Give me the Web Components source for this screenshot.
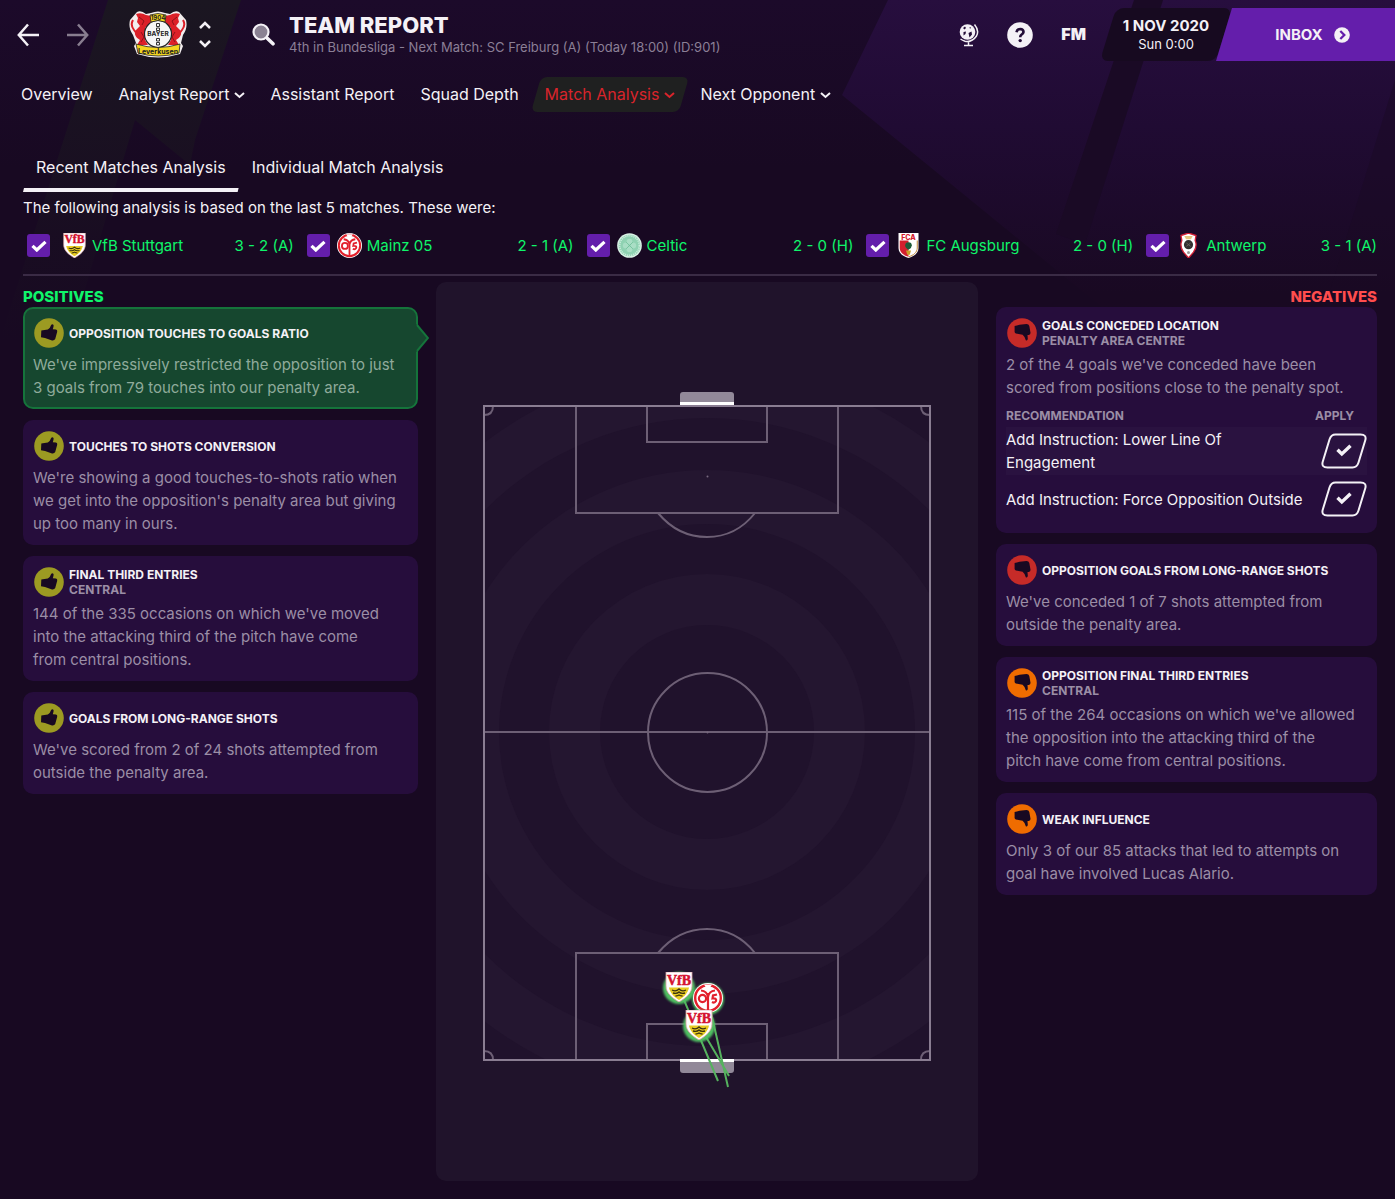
<!DOCTYPE html>
<html lang="en">
<head>
<meta charset="utf-8">
<meta name="viewport" content="width=device-width, initial-scale=1">
<title>Team Report</title>
<style>
    :root {
        --text: #f4f1f6;
        --muted: #9b8ea6;
        --card: #260d3c;
        --ink: #180922;
        --accent: #641eab;
        --good: #0ff56a;
        --bad: #ff4d4d;
    }
    body {
        margin: 0;
        position: relative;
        min-height: 100vh;
        background: var(--ink);
        color: var(--text);
        font: 15px/23px Inter, "Liberation Sans", sans-serif;
    }
    main {
        position: relative;
        padding: 0 18px 18px 23px;
    }
    nav.sections {
        position: relative;
        display: flex;
        padding: 8px 8px 0;
        font-size: 16px;
    }
    .tabs {
        display: flex;
        margin-top: 33px;
        font-size: 16px;
    }
    .intro {
        margin: 4px 0 0;
    }
    .matches {
        display: grid;
        grid-template-columns: 267fr 267fr 267fr 267fr 231fr;
        gap: 13px;
        margin: 15px 0 17px;
        padding-left: 4px;
    }
    .matches match-toggle:first-child {
        --crest-gap: 12px;
    }
    hr {
        height: 2px;
        margin: 0 0 6px;
        border: 0;
        background: #3a2b45;
    }
    .columns {
        display: grid;
        grid-template-columns: 395fr 542fr 381fr;
        gap: 18px;
        align-items: start;
    }
</style>
</head>
<body>
<page-backdrop></page-backdrop>

<top-bar date="1 NOV 2020" time="Sun 0:00">
    <span slot="title">TEAM REPORT</span>
    <span slot="subtitle">4th in Bundesliga - Next Match: SC Freiburg (A) (Today 18:00) (ID:901)</span>
</top-bar>

<nav class="sections">
    <nav-item>Overview</nav-item>
    <nav-item menu>Analyst Report</nav-item>
    <nav-item>Assistant Report</nav-item>
    <nav-item>Squad Depth</nav-item>
    <nav-item menu active>Match Analysis</nav-item>
    <nav-item menu>Next Opponent</nav-item>
</nav>

<main>
    <div class="tabs">
        <tab-link active>Recent Matches Analysis</tab-link>
        <tab-link>Individual Match Analysis</tab-link>
    </div>
    <p class="intro">The following analysis is based on the last 5 matches. These were:</p>
    <div class="matches">
        <match-toggle crest="stuttgart" score="3 - 2 (A)">VfB Stuttgart</match-toggle>
        <match-toggle crest="mainz" score="2 - 1 (A)">Mainz 05</match-toggle>
        <match-toggle crest="celtic" score="2 - 0 (H)">Celtic</match-toggle>
        <match-toggle crest="augsburg" score="2 - 0 (H)">FC Augsburg</match-toggle>
        <match-toggle crest="antwerp" score="3 - 1 (A)">Antwerp</match-toggle>
    </div>
    <hr>
    <div class="columns">
        <insight-list kind="good">
            <span slot="heading">POSITIVES</span>
            <insight-card tone="good" heading="OPPOSITION TOUCHES TO GOALS RATIO" selected>We've impressively restricted the opposition to just<br>3 goals from 79 touches into our penalty area.</insight-card>
            <insight-card tone="good" heading="TOUCHES TO SHOTS CONVERSION">We're showing a good touches-to-shots ratio when<br>we get into the opposition's penalty area but giving<br>up too many in ours.</insight-card>
            <insight-card tone="good" heading="FINAL THIRD ENTRIES" area="CENTRAL">144 of the 335 occasions on which we've moved<br>into the attacking third of the pitch have come<br>from central positions.</insight-card>
            <insight-card tone="good" heading="GOALS FROM LONG-RANGE SHOTS">We've scored from 2 of 24 shots attempted from<br>outside the penalty area.</insight-card>
        </insight-list>

        <pitch-map></pitch-map>

        <insight-list kind="bad">
            <span slot="heading">NEGATIVES</span>
            <insight-card tone="bad" heading="GOALS CONCEDED LOCATION" area="PENALTY AREA CENTRE">2 of the 4 goals we've conceded have been<br>scored from positions close to the penalty spot.
                <advice-table slot="advice"></advice-table>
            </insight-card>
            <insight-card tone="bad" heading="OPPOSITION GOALS FROM LONG-RANGE SHOTS">We've conceded 1 of 7 shots attempted from<br>outside the penalty area.</insight-card>
            <insight-card tone="weak" heading="OPPOSITION FINAL THIRD ENTRIES" area="CENTRAL">115 of the 264 occasions on which we've allowed<br>the opposition into the attacking third of the<br>pitch have come from central positions.</insight-card>
            <insight-card tone="weak" heading="WEAK INFLUENCE">Only 3 of our 85 attacks that led to attempts on<br>goal have involved Lucas Alario.</insight-card>
        </insight-list>
    </div>
</main>

<script>
// Club crests, all on a 30x30 canvas
const CRESTS = {
    stuttgart: `
        <path d="M2 0H28V14C28 21 22 26 15 30C8 26 2 21 2 14Z" fill="#fff" stroke="#d8a0a4" stroke-width=".8"/>
        <path d="M5 15.500H25C24 21 20 25 15 28C10 25 6 21 5 15.500Z" fill="#e8cb21"/>
        <path d="M8 18q4 2 7-1q3 3 7 1M9 21q4 1 6-1q2 2 6 1M11.500 24q2 0 3.500-1q1.500 1 3.500 1" fill="none" stroke="#3a3210" stroke-width="1.300"/>
        <text x="15" y="12.500" text-anchor="middle" font-family="Liberation Serif, serif" font-weight="700" font-size="14" fill="#d5122f" stroke="#d5122f" stroke-width=".5">VfB</text>`,
    mainz: `
        <circle cx="15" cy="15" r="15" fill="#fff"/>
        <circle cx="15" cy="15" r="12.800" fill="#fff" stroke="#e2202c" stroke-width="2.400"/>
        <path d="M11 1.500L15 8L19 1.500Z" fill="#fff"/>
        <circle cx="9.500" cy="15.500" r="3.600" fill="none" stroke="#e2202c" stroke-width="2.200"/>
        <path d="M15 10V28M8 7.500Q14 8 15 14Q16 8 22 7.500M24 11.500L20 12.500L19.500 15.500Q24 15 23 18Q21.500 20.500 19 19" fill="none" stroke="#e2202c" stroke-width="2.200"/>`,
    celtic: `
        <circle cx="15" cy="15" r="14.800" fill="#d9f2e6"/>
        <circle cx="15" cy="15" r="13" fill="#8fd2b2"/>
        <circle cx="15" cy="15" r="11.800" fill="none" stroke="#c9ecdb" stroke-width="2" stroke-dasharray="1.500 1"/>
        <g fill="#a9dec5"><circle cx="15" cy="10.500" r="3.500"/><circle cx="10.500" cy="15" r="3.500"/><circle cx="19.500" cy="15" r="3.500"/><circle cx="15" cy="19.500" r="3.500"/></g>
        <path d="M11 11l8 8M19 11l-8 8" stroke="#6fbf99" stroke-width="1"/>`,
    augsburg: `
        <path d="M3 0H27V18C27 24 22 28 15 30C8 28 3 24 3 18Z" fill="#fff"/>
        <path d="M4.500 9H15V28.500C9 27 4.500 23 4.500 18Z" fill="#d3202e"/>
        <path d="M25.500 9V18C25.500 23 21 27 15 28.500" fill="none" stroke="#c08a3c" stroke-width="1.200"/>
        <path d="M15 11q4 0 4 4q0 3-4 5q-4-2-4-5q0-4 4-4Z" fill="#1d5b38"/>
        <path d="M12 21h6l-1.500 5h-3Z" fill="#c9a227"/>
        <text x="15" y="8" text-anchor="middle" font-family="Inter, sans-serif" font-weight="800" font-size="8.500" fill="#d3202e">FCA</text>`,
    antwerp: `
        <path d="M15 0L24 3L23 9Q26 16 21 23L15 30L9 23Q4 16 7 9L6 3Z" fill="#fff" stroke="#cf1f35" stroke-width="1.600"/>
        <path d="M10 3.500h10l-2 4h-6Z" fill="#e3c77e"/>
        <circle cx="15" cy="14" r="5.500" fill="#33302f"/>
        <path d="M12.500 12l5 4M17.500 12l-5 4" stroke="#6d6661" stroke-width="1"/>
        <circle cx="15" cy="23.500" r="1.800" fill="#9a9a9a"/>`
};

// Both thumbs share the 30px round badge
const THUMBS = {
    up: 'M7.300 12.600L13.800 11.600Q16.200 10 17 7.200Q18.200 5.400 19.600 7Q19.800 8.600 18.800 11.200L22 11.500Q23.600 12 23.200 13.800L21.200 21Q20.200 22.800 18 22.400L11 20L7 19.200Z',
    down: 'M7.600 8L12.500 6.800L19.500 6Q21.800 6 22.300 8L23.500 14.800Q23.600 16.600 21.800 16.900L20.500 17L20.800 21Q20.400 23 18.800 22.200Q18.400 19.200 15.600 16.800L9 15.600Q7.800 15.200 7.600 14Z'
};

const CHECK = 'M1.500 5.800L5.800 10L14.500 1.800';

class PageBackdrop extends HTMLElement {
    constructor() {
        super();
        this.attachShadow({ mode: 'open' });
        this.shadowRoot.innerHTML = `
            <style>
                :host { position: absolute; inset: 0 0 auto; height: 420px; overflow: hidden; }
                svg { display: block; width: 100%; height: 100%; }
            </style>
            <svg viewBox="0 0 1395 420" preserveAspectRatio="none" aria-hidden="true">
                <defs>
                    <linearGradient id="top" x1="0" y1="0" x2="0" y2="1">
                        <stop offset="0" stop-color="#1c0a2a"/>
                        <stop offset=".4" stop-color="#180922"/>
                    </linearGradient>
                    <linearGradient id="shard" x1="0" y1="0" x2="0" y2="1">
                        <stop offset="0" stop-color="#270e3e"/>
                        <stop offset=".3" stop-color="#200b33"/>
                        <stop offset=".7" stop-color="#190922"/>
                        <stop offset="1" stop-color="#180922"/>
                    </linearGradient>
                    <linearGradient id="olive" x1="0" y1="0" x2="0" y2="1">
                        <stop offset="0" stop-color="#1b1621"/>
                        <stop offset="1" stop-color="#180922"/>
                    </linearGradient>
                </defs>
                <rect width="1395" height="420" fill="url(#top)"/>
                <path d="M108 0H241L195 140L190 165L135 120L70 340H0Z" fill="url(#olive)"/>
                <path d="M888 0H1395V420H1240L842 95Z" fill="url(#shard)"/>
                <path d="M1134 0H1163L1085 244L1056 234Z" fill="#1a0a25"/>
                <path d="M1395 80V420H1290Z" fill="#190a23" fill-opacity=".5"/>
            </svg>
        `;
    }
}

class TopBar extends HTMLElement {
    constructor() {
        super();
        this.attachShadow({ mode: 'open' });
        this.shadowRoot.innerHTML = `
            <style>
                :host { display: block; position: relative; }
                header { display: flex; align-items: center; height: 69px; padding-left: 17px; }
                button, a { padding: 0; border: 0; background: none; color: inherit; font: inherit; text-decoration: none; cursor: pointer; }
                svg { display: block; }
                .forward { margin-left: 28px; opacity: .5; }
                .crest { margin-left: 40px; }
                .switch { display: grid; gap: 11px; margin: 0 41px 0 12px; }
                .titles { flex: 1; margin-left: 14px; }
                h1 { margin: 0; font-size: 22px; line-height: 24px; font-weight: 800; }
                p { margin: 0; font-size: 13px; line-height: 20px; color: #8b7f96; }
                .tools { display: flex; align-items: center; gap: 28px; margin-right: 22px; }
                .fm { font-size: 16px; font-weight: 900; }
                .date { position: relative; width: 116px; height: 53px; display: grid; align-content: center; text-align: center; }
                .date::before { content: ""; position: absolute; inset: 0; border-radius: 8px; background: #170a20; transform: skewX(-17deg); }
                .date * { position: relative; line-height: 18px; }
                .date span { font-size: 13px; }
                .inbox {
                    position: relative;
                    display: flex; align-items: center; justify-content: center; gap: 11px;
                    box-sizing: border-box; width: 179px; height: 53px; margin-left: -8px; padding-left: 14px;
                    background: var(--accent); font-weight: 700;
                    clip-path: polygon(16px 0, 100% 0, 100% 100%, 0 100%);
                }
            </style>
            <header>
                <button aria-label="Back"><svg width="22" height="24" fill="none" stroke="#f4f1f6" stroke-width="2.500"><path d="M11 1.500L1.800 12L11 22.500M2 12H22"/></svg></button>
                <button class="forward" aria-label="Forward"><svg width="22" height="24" fill="none" stroke="#f4f1f6" stroke-width="2.500"><path d="M11 1.500L20.200 12L11 22.500M20 12H0"/></svg></button>
                <svg class="crest" width="58" height="47" viewBox="0 0 58 47" role="img" aria-label="Bayer Leverkusen">
                    <path d="M8 1Q12-1 17 3L22 2Q29-1 36 2L41 3Q46-1 50 1L57 9Q59 17 54 24L52 32L54 35L51 43Q29 50 8 43L5 35L7 32L4 24Q-1 17 1 9Z" fill="#f3eeee"/>
                    <path d="M7 3Q12 1 17 4L22 5V11L16 17L16 29L19 34H8L11 29Q5 26 6 20L11 15L8 11L9 7ZM51 3Q46 1 41 4L36 5V11L42 17V29L39 34H50L47 29Q53 26 52 20L47 15L50 11L49 7Z" fill="#dc2028"/>
                    <path d="M4 9Q1 14 5 19T9 27M54 9Q57 14 53 19T49 27" fill="none" stroke="#dc2028" stroke-width="2"/>
                    <path d="M10 6l5 4-2 4M48 6l-5 4 2 4M12 21l3 5-3 5M46 21l-3 5 3 5" fill="none" stroke="#8d1218" stroke-width="1"/>
                    <circle cx="29" cy="23" r="13.500" fill="#f6f6f6" stroke="#222" stroke-width="1.200"/>
                    <path d="M21 4Q29 1 37 4L36 11Q29 8 22 11Z" fill="#f2d51e" stroke="#222" stroke-width=".8"/>
                    <path d="M7 33Q29 40 51 33L50 42Q29 48 9 42Z" fill="#f2d51e" stroke="#222" stroke-width=".8"/>
                    <g font-family="Inter, sans-serif" font-weight="700" text-anchor="middle" fill="#222">
                        <text x="29" y="9" font-size="6">1904</text>
                        <text x="29" y="25.200" font-size="6.500">BAYER</text>
                        <text x="29" y="43" font-size="7">Leverkusen</text>
                    </g>
                    <path d="M27.500 12.500h3v3h-3zM27.500 17h3v2.500h-3zM27.500 27.500h3v2.500h-3zM27.500 31.500h3v2.500h-3z" fill="none" stroke="#333" stroke-width="1"/>
                </svg>
                <div class="switch">
                    <button aria-label="Previous club"><svg width="12" height="8" fill="none" stroke="#f4f1f6" stroke-width="2.500"><path d="M1 7L6 2L11 7"/></svg></button>
                    <button aria-label="Next club"><svg width="12" height="8" fill="none" stroke="#f4f1f6" stroke-width="2.500"><path d="M1 1L6 6L11 1"/></svg></button>
                </div>
                <button aria-label="Search"><svg width="23" height="23"><circle cx="9" cy="9" r="7.500" fill="#8a8192" stroke="#f4f1f6" stroke-width="2.200"/><path d="M15.500 15.500L21 20.800" stroke="#f4f1f6" stroke-width="3.600" stroke-linecap="round"/></svg></button>
                <div class="titles">
                    <h1><slot name="title"></slot></h1>
                    <p><slot name="subtitle"></slot></p>
                </div>
                <div class="tools">
                    <button aria-label="World">
                        <svg width="20" height="24" viewBox="0 0 20 24" fill="none" stroke="#f4f1f6">
                            <circle cx="8.500" cy="9" r="7.800" fill="#f4f1f6" stroke="none"/>
                            <path d="M4 5L6 3.500L7 5L5.500 6.500ZM4.500 9L7 8.500L6.500 11L4.500 12.500ZM10 5L11.500 4L12 5.500ZM9.500 10L12.500 8.500L13 11.500L10.500 14.500Z" fill="#230d37" stroke="none"/>
                            <path d="M15.500 1.500Q20.500 7.500 17.500 13Q13 19.500 6 18.200Q3.500 17.500 1.500 16M9.500 18.500V22M5 22.500H14" stroke-width="1.500"/>
                        </svg>
                    </button>
                    <button aria-label="Help">
                        <svg width="26" height="26"><circle cx="13" cy="13" r="12.800" fill="#f4f1f6"/><path d="M9.500 10.200Q10 7 13.200 7Q16.600 7.200 16.500 10Q16.300 11.800 14.300 12.800Q13.200 13.500 13.200 15.300" fill="none" stroke="#230d37" stroke-width="2.600"/><circle cx="13.200" cy="18.600" r="1.700" fill="#230d37"/></svg>
                    </button>
                    <button class="fm">FM</button>
                </div>
                <div class="date"><strong id="date"></strong><span id="time"></span></div>
                <a class="inbox" href="#inbox">INBOX
                    <svg width="16" height="16"><circle cx="8" cy="8" r="7.800" fill="#f4f1f6"/><path d="M6.300 4L10.300 8L6.300 12" fill="none" stroke="#641eab" stroke-width="2.300"/></svg>
                </a>
            </header>
        `;
        this.shadowRoot.getElementById('date').textContent = this.getAttribute('date');
        this.shadowRoot.getElementById('time').textContent = this.getAttribute('time');
    }
}

class NavItem extends HTMLElement {
    constructor() {
        super();
        this.attachShadow({ mode: 'open' });
        this.shadowRoot.innerHTML = `
            <style>
                :host { display: block; }
                a { position: relative; display: flex; align-items: center; gap: 5px; height: 35px; padding: 0 13px; color: inherit; text-decoration: none; white-space: nowrap; }
                a > * { position: relative; }
                :host([menu]) a { padding-right: 12px; }
                :host([active]) a { color: #d9242b; }
                :host([active]) a::before { content: ""; position: absolute; inset: 0 4px; border-radius: 6px; background: #1f2020; transform: skewX(-16deg); }
                svg { margin-top: 2px; }
            </style>
            <a href="#"><span><slot></slot></span>${this.hasAttribute('menu') ? '<svg width="11" height="7" fill="none" stroke="currentColor" stroke-width="2"><path d="M1 1L5.500 5L10 1"/></svg>' : ''}</a>
        `;
    }
}

class TabLink extends HTMLElement {
    constructor() {
        super();
        this.attachShadow({ mode: 'open' });
        this.shadowRoot.innerHTML = `
            <style>
                :host { display: block; }
                a { display: grid; grid-template-rows: 43px 4px; align-items: center; color: inherit; text-decoration: none; }
                span { padding: 2px 13px 0; }
                :host([active]) i { height: 4px; background: var(--text); clip-path: polygon(1px 0, 100% 0, calc(100% - 1px) 100%, 0 100%); }
            </style>
            <a href="#"><span><slot></slot></span><i></i></a>
        `;
    }
}

class MatchToggle extends HTMLElement {
    constructor() {
        super();
        this.attachShadow({ mode: 'open' });
        this.shadowRoot.innerHTML = `
            <style>
                :host { display: block; color: var(--good); }
                label { display: flex; align-items: center; height: 23px; white-space: nowrap; }
                .box { display: grid; place-items: center; width: 23px; height: 23px; }
                .box > * { grid-area: 1 / 1; }
                input { appearance: none; width: 23px; height: 23px; margin: 0; border-radius: 3px; background: var(--accent); }
                .tick { pointer-events: none; visibility: hidden; }
                input:checked + .tick { visibility: visible; }
                .crest { margin: 0 5px 0 var(--crest-gap, 7px); }
                .name { flex: 1; }
            </style>
            <label>
                <span class="box">
                    <input type="checkbox" checked>
                    <svg class="tick" width="16" height="12" fill="none" stroke="#fff" stroke-width="3.200"><path d="${CHECK}"/></svg>
                </span>
                <svg class="crest" width="25" height="25" viewBox="0 0 30 30" aria-hidden="true">${CRESTS[this.getAttribute('crest')]}</svg>
                <span class="name"><slot></slot></span>
                <span>${this.getAttribute('score')}</span>
            </label>
        `;
    }
}

class InsightList extends HTMLElement {
    constructor() {
        super();
        this.attachShadow({ mode: 'open' });
        this.shadowRoot.innerHTML = `
            <style>
                :host { display: block; }
                h2 { margin: 0; padding-top: 5px; font-size: 15px; line-height: 20px; font-weight: 800; color: var(--good); }
                :host([kind="bad"]) h2 { color: var(--bad); text-align: right; }
                .cards { display: grid; gap: 11px; }
            </style>
            <h2><slot name="heading"></slot></h2>
            <div class="cards"><slot></slot></div>
        `;
    }
}

class InsightCard extends HTMLElement {
    constructor() {
        super();
        this.attachShadow({ mode: 'open' });
        const tone = this.getAttribute('tone');
        const area = this.getAttribute('area');
        const fill = { good: '#9c9a22', bad: '#c62b28', weak: '#ef6c00' }[tone];
        this.shadowRoot.innerHTML = `
            <style>
                :host { display: block; position: relative; box-sizing: border-box; padding: 10px; border-radius: 10px; background: var(--card); }
                :host([selected]) { padding: 8px; border: 2px solid #15743b; background: #16472f; }
                .head { display: flex; align-items: center; gap: 5px; height: 32px; margin-bottom: 4px; }
                .head svg { flex: none; margin-left: 1px; }
                h3 { margin: 0; font-size: 12px; line-height: 15px; font-weight: 700; }
                h3 small { display: block; font-size: 12px; color: var(--muted); }
                p { margin: 0; color: var(--muted); }
                :host([selected]) p { color: #8fab9b; }
                .pointer { display: none; position: absolute; right: -13px; top: 15px; }
                :host([selected]) .pointer { display: block; }
            </style>
            <div class="head">
                <svg width="30" height="30" aria-hidden="true"><circle cx="15" cy="15" r="14.800" fill="${fill}"/><path d="${tone === 'good' ? THUMBS.up : THUMBS.down}" fill="#180922"/></svg>
                <h3>${this.getAttribute('heading')}${area ? `<small>${area}</small>` : ''}</h3>
            </div>
            <p><slot></slot></p>
            <slot name="advice"></slot>
            <svg class="pointer" width="13" height="28" aria-hidden="true"><path d="M0 0L2 2L12 14L2 26L0 28Z" fill="#16472f"/><path d="M1 1L12 14L1 27" fill="none" stroke="#15743b" stroke-width="2"/></svg>
        `;
    }
}

class AdviceTable extends HTMLElement {
    constructor() {
        super();
        this.attachShadow({ mode: 'open' });
        const items = [
            ['Add Instruction: Lower Line Of', 'Engagement'],
            ['Add Instruction: Force Opposition Outside']
        ];
        const rows = items.map(lines => `
            <tr>
                <td>${lines.join('<br>')}</td>
                <td class="apply">
                    <button aria-label="Apply">
                        <svg width="46" height="36" fill="none" stroke="#f4f1f6">
                            <path d="M14.500 1.500H39.500Q46 1.500 44.200 7.500L37.500 29.500Q36 34.500 31.500 34.500H6.500Q0 34.500 1.800 28.500L8.500 6.500Q10 1.500 14.500 1.500Z" stroke-width="2"/>
                            <path d="${CHECK}" transform="translate(15 11)" stroke-width="3.400"/>
                        </svg>
                    </button>
                </td>
            </tr>`).join('');
        this.shadowRoot.innerHTML = `
            <style>
                :host { display: block; padding-top: 6px; }
                table { width: 100%; border-spacing: 0; color: var(--text); }
                th { height: 22px; padding: 0; font-size: 12px; line-height: 22px; text-align: left; color: var(--muted); }
                th + th { width: 52px; }
                td { height: 48px; padding: 0; }
                tbody tr:nth-child(odd) td { background: #2a1240; }
                td.apply { padding-left: 6px; }
                button { display: block; padding: 0; border: 0; background: none; cursor: pointer; }
                svg { display: block; }
            </style>
            <table>
                <thead><tr><th>RECOMMENDATION</th><th>APPLY</th></tr></thead>
                <tbody>${rows}</tbody>
            </table>
        `;
    }
}

class PitchMap extends HTMLElement {
    constructor() {
        super();
        this.attachShadow({ mode: 'open' });
        // Mown rings, drawn from the outside in so each covers the last
        const rings = [365, 314, 262, 208, 158, 107].map((r, i) =>
            `<circle cx="271" cy="450" r="${r}" fill="${i % 2 ? '#20122c' : '#241630'}"/>`).join('');
        const marker = (crest, x, y) => `
            <circle cx="${x}" cy="${y}" r="16" fill="#4fbf62" filter="url(#soft)"/>
            <svg x="${x - 15}" y="${y - 16}" width="30" height="30" viewBox="0 0 30 30">${CRESTS[crest]}</svg>`;
        this.shadowRoot.innerHTML = `
            <style>
                :host { display: block; border-radius: 10px; background: #20132b; }
                svg { display: block; }
                .pitch { width: 100%; height: auto; }
            </style>
            <svg class="pitch" viewBox="0 0 542 899" role="img" aria-label="Goals conceded on the pitch">
                <defs>
                    <clipPath id="field"><rect x="48" y="124" width="446" height="654"/></clipPath>
                    <filter id="soft" x="-20%" y="-20%" width="140%" height="140%"><feGaussianBlur stdDeviation="1"/></filter>
                </defs>
                <g clip-path="url(#field)"><rect x="48" y="124" width="446" height="654" fill="#20122c"/>${rings}</g>
                <g fill="none" stroke="#6d5f75" stroke-width="2">
                    <path d="M48 450H494M140 124V231H402V124M211 124V160H331V124M140 778V671H402V778M211 778V742H331V778"/>
                    <circle cx="271.500" cy="450.500" r="59.500"/>
                    <path d="M222 231Q242 255 271 255T319 231M222 671Q242 647 271 647T319 671"/>
                    <path d="M57 124Q57 133 48 133M485 124Q485 133 494 133M57 778Q57 769 48 769M485 778Q485 769 494 769"/>
                </g>
                <rect x="48" y="124" width="446" height="654" fill="none" stroke="#8a7d92" stroke-width="2"/>
                <g fill="#78697f"><circle cx="271.500" cy="194.500" r="1"/><circle cx="271.500" cy="450.500" r="1"/></g>
                <path d="M244 120V113Q244 110 247 110H295Q298 110 298 113V120Z" fill="#928999"/>
                <path d="M244 120H298V123H244Z" fill="#fff"/>
                <path d="M244 780V788Q244 791 247 791H295Q298 791 298 788V780Z" fill="#928999"/>
                <path d="M244 777H298V780H244Z" fill="#fff"/>
                <path d="M243 706L282 799M263 743L293 794M272 717L292 805" stroke="#55b25e" stroke-width="2"/>
                ${marker('stuttgart', 243, 706)}
                ${marker('mainz', 272, 717)}
                ${marker('stuttgart', 263, 744)}
            </svg>
        `;
    }
}

customElements.define('page-backdrop', PageBackdrop);
customElements.define('top-bar', TopBar);
customElements.define('nav-item', NavItem);
customElements.define('tab-link', TabLink);
customElements.define('match-toggle', MatchToggle);
customElements.define('insight-list', InsightList);
customElements.define('insight-card', InsightCard);
customElements.define('advice-table', AdviceTable);
customElements.define('pitch-map', PitchMap);
</script>
</body>
</html>
